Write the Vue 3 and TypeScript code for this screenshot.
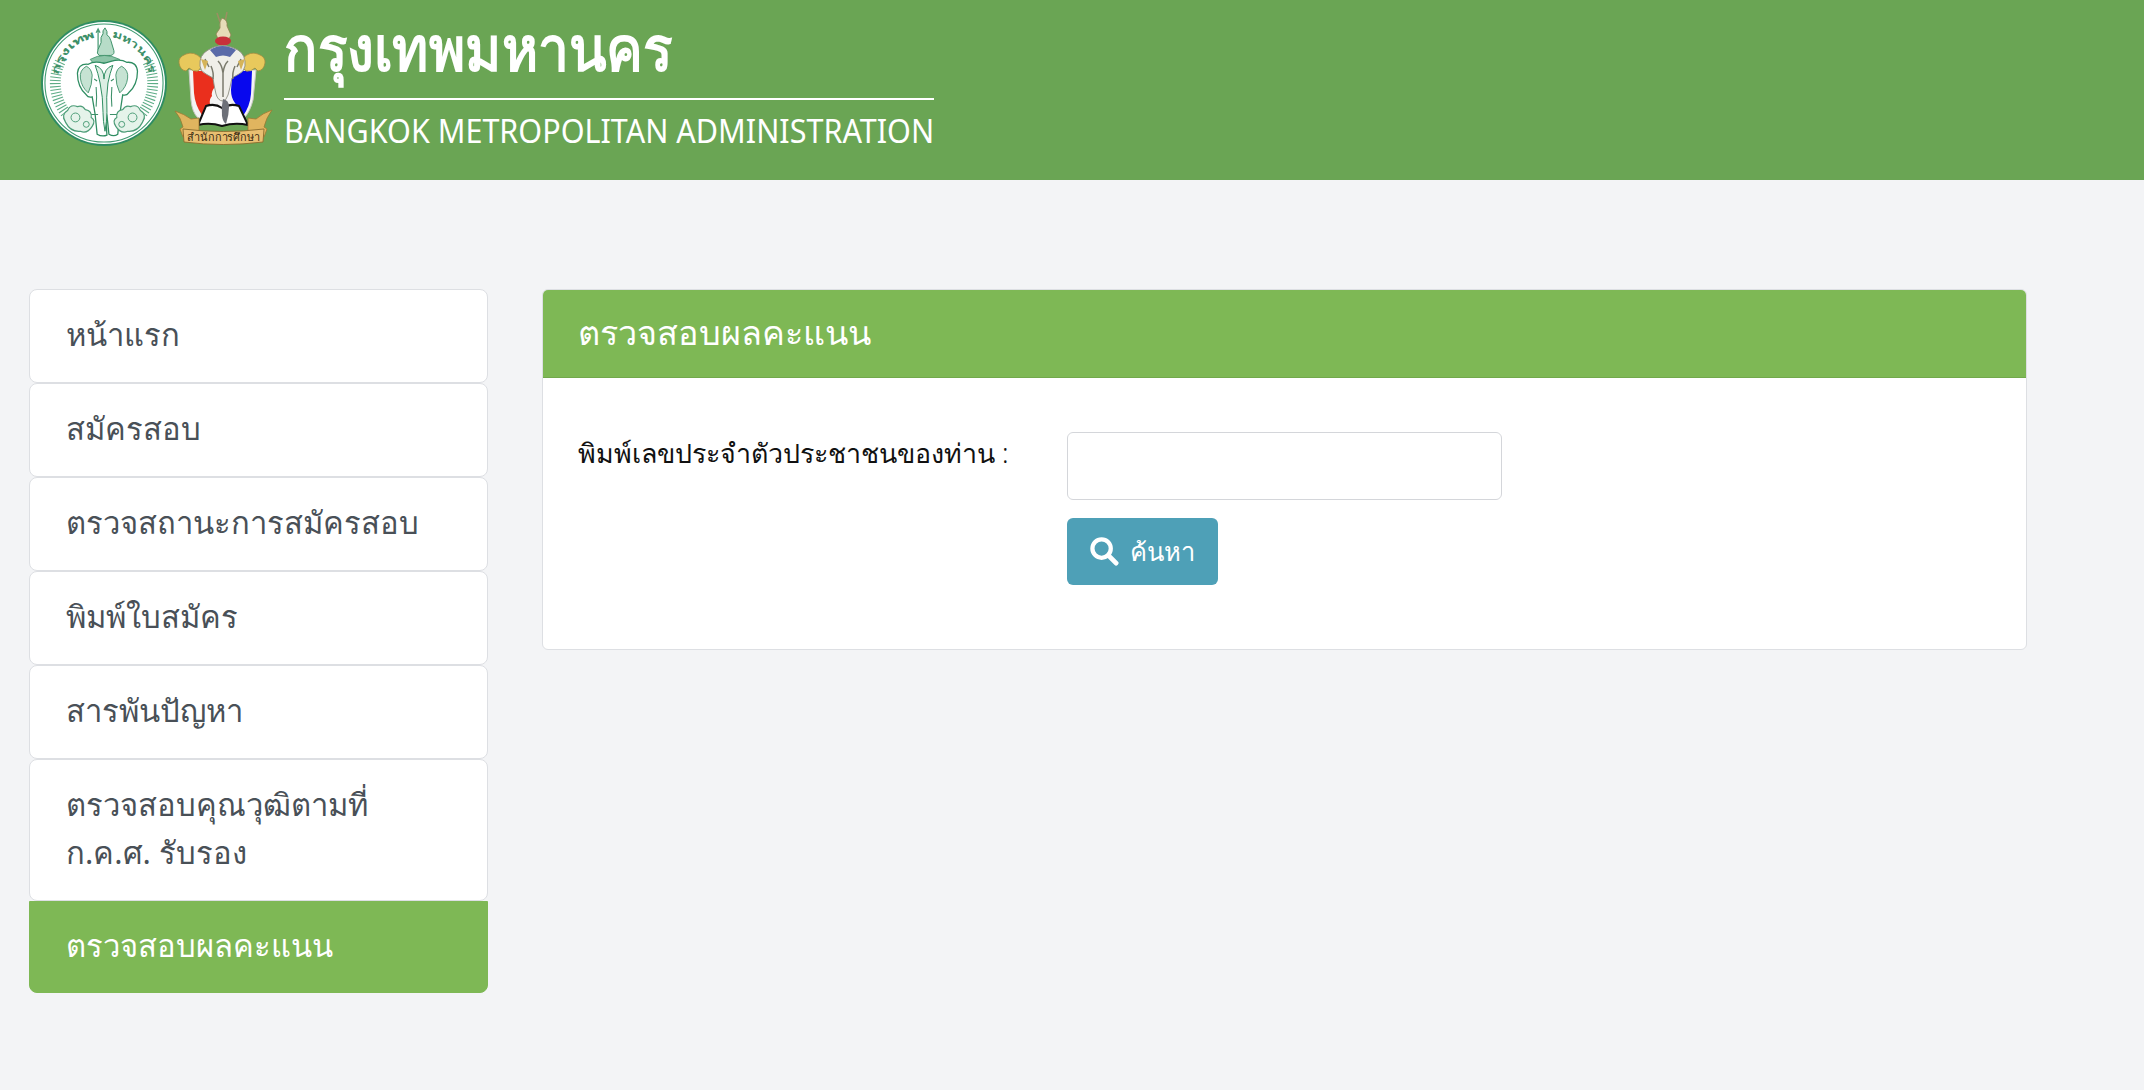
<template>
  <div class="page">
    <header class="banner">
      <!-- BMA seal -->
      <svg class="seal" viewBox="0 0 128 128" aria-hidden="true">
        <defs>
          <path id="arcLeft" d="M17.5 56 A47 47 0 0 1 56 17.7" />
          <path id="arcRight" d="M72 17.7 A47 47 0 0 1 110.5 56" />
        </defs>
        <circle cx="64" cy="64" r="64" fill="#2f8d62" />
        <circle cx="64" cy="64" r="62" fill="#fff" />
        <circle cx="64" cy="64" r="60" fill="none" stroke="#3d9a70" stroke-width="1.1" />
        <g stroke="#5dac86" stroke-width="1.1">
          <line
            v-for="t in sealTicks"
            :key="t.id"
            :x1="t.x1"
            :y1="t.y1"
            :x2="t.x2"
            :y2="t.y2"
          />
        </g>
        <g class="seal-text">
          <text><textPath href="#arcLeft" textLength="56" lengthAdjust="spacingAndGlyphs">กรุงเทพ</textPath></text>
          <text><textPath href="#arcRight" textLength="56" lengthAdjust="spacingAndGlyphs">มหานคร</textPath></text>
        </g>
        <!-- rider -->
        <path d="M58 9 v22 M56 13 l2 -4 l2 4" stroke="#4d9d78" stroke-width="1.3" fill="none" />
        <path
          d="M65 8 q3 4 2 7 q3 2 4 6 l3 10 q1 4 -3 5 h-12 q-3 -2 -1 -6 l3 -7 q-1 -6 2 -9 q-1 -3 2 -6 z"
          fill="#b7dcc8"
          stroke="#3d9069"
          stroke-width="1"
        />
        <path d="M50 40 q14 -8 30 0 l-4 5 q-11 -4 -22 0 z" fill="#8dc5a8" stroke="#3d9069" stroke-width="0.8" />
        <!-- elephant -->
        <path
          d="M64 44 q-10 -3 -16 1 q-10 -1 -11 9 q0 14 9 22 q2 3 6 2 l3 18 l2 20 q5 3 10 1 l-1 -14 q0 -8 -1 -15 l-1 -6 q0 8 3 15 l2 19 q5 3 9 0 l2 -20 l3 -20 q4 1 6 -2 q9 -8 9 -22 q-1 -10 -11 -9 q-6 -4 -16 -1 z"
          fill="#fff"
          stroke="#2f8d62"
          stroke-width="1.3"
        />
        <path d="M46 47 q-7 4 -6 12 q1 9 8 15 q4 -8 4 -18 q-1 -7 -6 -9 z" fill="#c6e3d3" stroke="#3d9069" stroke-width="0.9" />
        <path d="M82 47 q7 4 6 12 q-1 9 -8 15 q-4 -8 -4 -18 q1 -7 6 -9 z" fill="#c6e3d3" stroke="#3d9069" stroke-width="0.9" />
        <path d="M55 46 q9 3 9 14 q0 -11 9 -14 q-3 8 -5 18 q-2 14 -1 30 q0 9 -2 19 q-2 -10 -2 -19 q0 -16 -3 -30 q-2 -10 -5 -18 z" fill="#dcefe4" stroke="#2f8d62" stroke-width="1" />
        <path d="M54 60 l3 2 M74 60 l-3 2 M56 68 q1 10 0 20 M72 68 q-1 10 0 20 M50 96 h8 M70 96 h8" fill="none" stroke="#3d9069" stroke-width="1.1" />
        <!-- clouds -->
        <g fill="#e5f3ea" stroke="#4d9d78" stroke-width="1.2">
          <path d="M25 104 q-5 -8 2 -12 q3 -7 10 -4 q5 -2 8 3 q7 1 6 8 q5 3 1 9 q-5 8 -12 5 q-10 1 -15 -9 z" />
          <path d="M103 104 q5 -8 -2 -12 q-3 -7 -10 -4 q-5 -2 -8 3 q-7 1 -6 8 q-5 3 -1 9 q5 8 12 5 q10 1 15 -9 z" />
        </g>
        <g fill="none" stroke="#4d9d78" stroke-width="1">
          <circle cx="35" cy="99" r="4.5" />
          <circle cx="93" cy="99" r="4.5" />
          <circle cx="46" cy="106" r="3" />
          <circle cx="82" cy="106" r="3" />
        </g>
      </svg>
      <!-- education office crest -->
      <svg class="crest" viewBox="0 0 100 136" aria-hidden="true">
        <!-- figure on top -->
        <path d="M43 2 l3 9 M53 1 l-2 10" stroke="#9c8f62" stroke-width="1.5" fill="none" />
        <path d="M48 7 q6 2 5 8 l4 9 l-2 4 h-11 l-2 -5 l4 -6 q-1 -7 2 -10 z" fill="#e6dcb8" stroke="#8d8150" stroke-width="0.8" />
        <ellipse cx="49" cy="30" rx="8" ry="4.5" fill="#c8303a" />
        <!-- shield -->
        <path d="M15 59 h67 l-3 30 q-3 12 -9 18 h-46 q-6 -6 -7 -18 z" fill="#f4f4f4" stroke="#c9c9c4" stroke-width="1" />
        <path d="M19 60 h18 q4 8 4 16 q-4 4 -3 9 q-3 3 -2 8 l-8 11 q-7 -10 -8 -22 z" fill="#ea2f1d" />
        <path d="M78 60 h-18 q-3 9 -3 19 q0 8 4 13 l8 13 q7 -10 8 -22 z" fill="#0808ee" />
        <!-- gold ears -->
        <path d="M27 47 q-7 -7 -15 -4 q-8 3 -7 9 q1 7 7 8 l3 -3 q4 4 9 3 l5 -6 z" fill="#e8c95c" stroke="#a08a40" stroke-width="0.8" />
        <path d="M69 47 q7 -7 15 -4 q8 3 7 9 q-1 7 -7 8 l-3 -3 q-4 4 -9 3 l-5 -6 z" fill="#e8c95c" stroke="#a08a40" stroke-width="0.8" />
        <!-- elephant head -->
        <path d="M34 39 q14 -9 30 0 q8 5 7 16 q-1 6 -6 8 l-7 4 q-2 10 -4 17 q-2 6 -5 6 q-5 0 -7 -7 q-2 -8 -3 -16 l-7 -4 q-6 -3 -6 -8 q-1 -11 8 -16 z" fill="#f0efe9" stroke="#8d8d80" stroke-width="0.9" />
        <path d="M36 39 q12 -8 26 0 l-6 7 q-7 -3 -14 0 z" fill="#5a6aa8" />
        <path d="M37 55 q3 7 2 13 M61 55 q-3 7 -2 13 M44 50 q4 4 5 12 q1 -8 5 -12 M49 62 v24 M31 48 l4 8 M67 48 l-4 8" stroke="#7b7b6d" stroke-width="1.5" fill="none" />
        <path d="M27 48 l4 11 l3 -9 z M71 48 l-4 11 l-3 -9 z" fill="#d5b45a" />
        <!-- book and pen -->
        <path d="M24 114 l8 -19 q9 -3 16 2 q8 -5 17 -2 l9 19 q-13 -3 -26 1 q-12 -4 -24 -1 z" fill="#fff" stroke="#111" stroke-width="2" />
        <path d="M49 88 q6 1 6 8 q0 8 -3 17 q-3 -2 -4 -8 q-1 -9 1 -17 z" fill="#6d7078" />
        <!-- ribbon -->
        <path d="M1 100 q9 3 16 8 l8 -1 v14 l-9 1 l-3 -3 l-4 7 l-3 -8 l3 -2 q-2 -9 -8 -16 z" fill="#e0b55f" stroke="#9d7a34" stroke-width="0.8" />
        <path d="M98 99 q-9 3 -16 9 l-8 -1 v14 l9 1 l3 -3 l4 7 l3 -8 l-3 -2 q2 -9 8 -17 z" fill="#e0b55f" stroke="#9d7a34" stroke-width="0.8" />
        <path d="M9 118 q40 5 81 0 l-1 13 q-40 5 -79 0 z" fill="#e9bf71" stroke="#8a6c2e" stroke-width="0.9" />
        <text class="crest-text" x="49.5" y="130" text-anchor="middle" textLength="73" lengthAdjust="spacingAndGlyphs">สำนักการศึกษา</text>
      </svg>
      <div class="brand">
        <div class="brand-th"><span>กรุงเทพมหานคร</span></div>
        <div class="brand-en"><span>BANGKOK METROPOLITAN ADMINISTRATION</span></div>
      </div>
    </header>

    <div class="content">
      <nav class="side">
        <a
          v-for="item in menu"
          :key="item.label"
          class="side-item"
          :class="{ active: item.active }"
        >{{ item.label }}</a>
      </nav>

      <section class="panel">
        <div class="panel-head">ตรวจสอบผลคะแนน</div>
        <div class="panel-body">
          <label class="field-label" for="citizen">พิมพ์เลขประจำตัวประชาชนของท่าน :</label>
          <div class="field">
            <input id="citizen" v-model="citizenId" class="input" type="text" />
            <button class="btn" type="button">
              <svg class="btn-icon" viewBox="0 0 30 30" aria-hidden="true">
                <circle cx="12" cy="12" r="9.5" fill="none" stroke="#fff" stroke-width="4.4" />
                <path d="M19 19 L27 27" stroke="#fff" stroke-width="5" stroke-linecap="round" />
              </svg>
              <span>ค้นหา</span>
            </button>
          </div>
        </div>
      </section>
    </div>
  </div>
</template>

<script setup lang="ts">
import { ref } from 'vue';

interface MenuItem {
  label: string;
  active?: boolean;
}

const menu: MenuItem[] = [
  { label: 'หน้าแรก' },
  { label: 'สมัครสอบ' },
  { label: 'ตรวจสถานะการสมัครสอบ' },
  { label: 'พิมพ์ใบสมัคร' },
  { label: 'สารพันปัญหา' },
  { label: 'ตรวจสอบคุณวุฒิตามที่ ก.ค.ศ. รับรอง' },
  { label: 'ตรวจสอบผลคะแนน', active: true },
];

const citizenId = ref('');

// radial ticks on both flanks of the seal, -25deg to +52deg from horizontal
const sealTicks = Array.from({ length: 44 }, (_, i) => {
  const side = i < 22 ? 1 : -1;
  const deg = -25 + ((i % 22) * 77) / 21;
  const a = (deg * Math.PI) / 180;
  return {
    id: i,
    x1: 64 + side * Math.cos(a) * 44,
    y1: 64 + Math.sin(a) * 44,
    x2: 64 + side * Math.cos(a) * 55,
    y2: 64 + Math.sin(a) * 55,
  };
});
</script>

<style>
html,
body {
  background: #f3f4f6;
}
</style>

<style scoped>
.page {
  min-height: 1090px;
  background: #f3f4f6;
  font-family: 'Noto Sans', 'DejaVu Sans', sans-serif;
}

.banner {
  height: 180px;
  background: #6aa554;
  display: flex;
  align-items: flex-start;
  padding-left: 41px;
}

.seal {
  width: 126px;
  height: 126px;
  margin-top: 20px;
  flex: none;
}

.seal-text {
  font-size: 10px;
  font-weight: 700;
  fill: #3d9069;
}

.crest {
  width: 100px;
  height: 136px;
  margin: 11px 0 0 7px;
  flex: none;
}

.crest-text {
  font-size: 11px;
  fill: #3a2c12;
}

.brand {
  margin-left: 10px;
  width: 650px;
  color: #fff;
}

.brand-th {
  height: 98px;
  font-size: 62px;
  font-weight: 700;
  line-height: 94px;
  border-bottom: 2px solid #fff;
  white-space: nowrap;
}

.brand-th span {
  display: inline-block;
  transform: scaleX(0.888);
  transform-origin: left center;
}

.brand-en {
  font-size: 33px;
  line-height: 36px;
  margin-top: 13px;
  white-space: nowrap;
}

.brand-en span {
  display: inline-block;
  transform: scaleX(0.925);
  transform-origin: left center;
}

.content {
  display: grid;
  grid-template-columns: 459px 1485px;
  column-gap: 54px;
  align-items: start;
  padding: 109px 0 0 29px;
}

.side {
  display: flex;
  flex-direction: column;
}

.side-item {
  display: block;
  padding: 20px 36px 24px;
  box-sizing: border-box;
  background: #fff;
  border: 1px solid #dddfe3;
  border-radius: 8px;
  font-size: 31px;
  line-height: 48px;
  color: #495057;
}

.side-item.active {
  padding: 19px 36px 23px;
  background: #7eb855;
  border-color: #7eb855;
  color: #fff;
  border-radius: 0 0 8px 8px;
}

.panel {
  height: 361px;
  box-sizing: border-box;
  background: #fff;
  border: 1px solid #dddfe3;
  border-radius: 6px;
  overflow: hidden;
}

.panel-head {
  height: 88px;
  box-sizing: border-box;
  padding-left: 35px;
  background: #7eb855;
  border-bottom: 1px solid #72a84c;
  color: #fff;
  font-size: 34.2px;
  line-height: 84px;
}

.panel-body {
  display: grid;
  grid-template-columns: 489px 435px;
  padding: 54px 35px 0;
}

.field-label {
  font-size: 26.8px;
  font-weight: 300;
  line-height: 42px;
  color: #111;
}

.field {
  display: flex;
  flex-direction: column;
  align-items: flex-start;
  gap: 18px;
}

.input {
  width: 100%;
  height: 68px;
  box-sizing: border-box;
  background: #fff;
  border: 1px solid #d4d6da;
  border-radius: 6px;
  outline: none;
}

.btn {
  display: flex;
  align-items: center;
  gap: 11px;
  width: 151px;
  height: 67px;
  box-sizing: border-box;
  padding: 0 0 0 23px;
  border: 0;
  border-radius: 6px;
  background: #4ea0b7;
  color: #fff;
  font-family: inherit;
  font-size: 25.5px;
}

.btn-icon {
  width: 29px;
  height: 29px;
  flex: none;
}
</style>
